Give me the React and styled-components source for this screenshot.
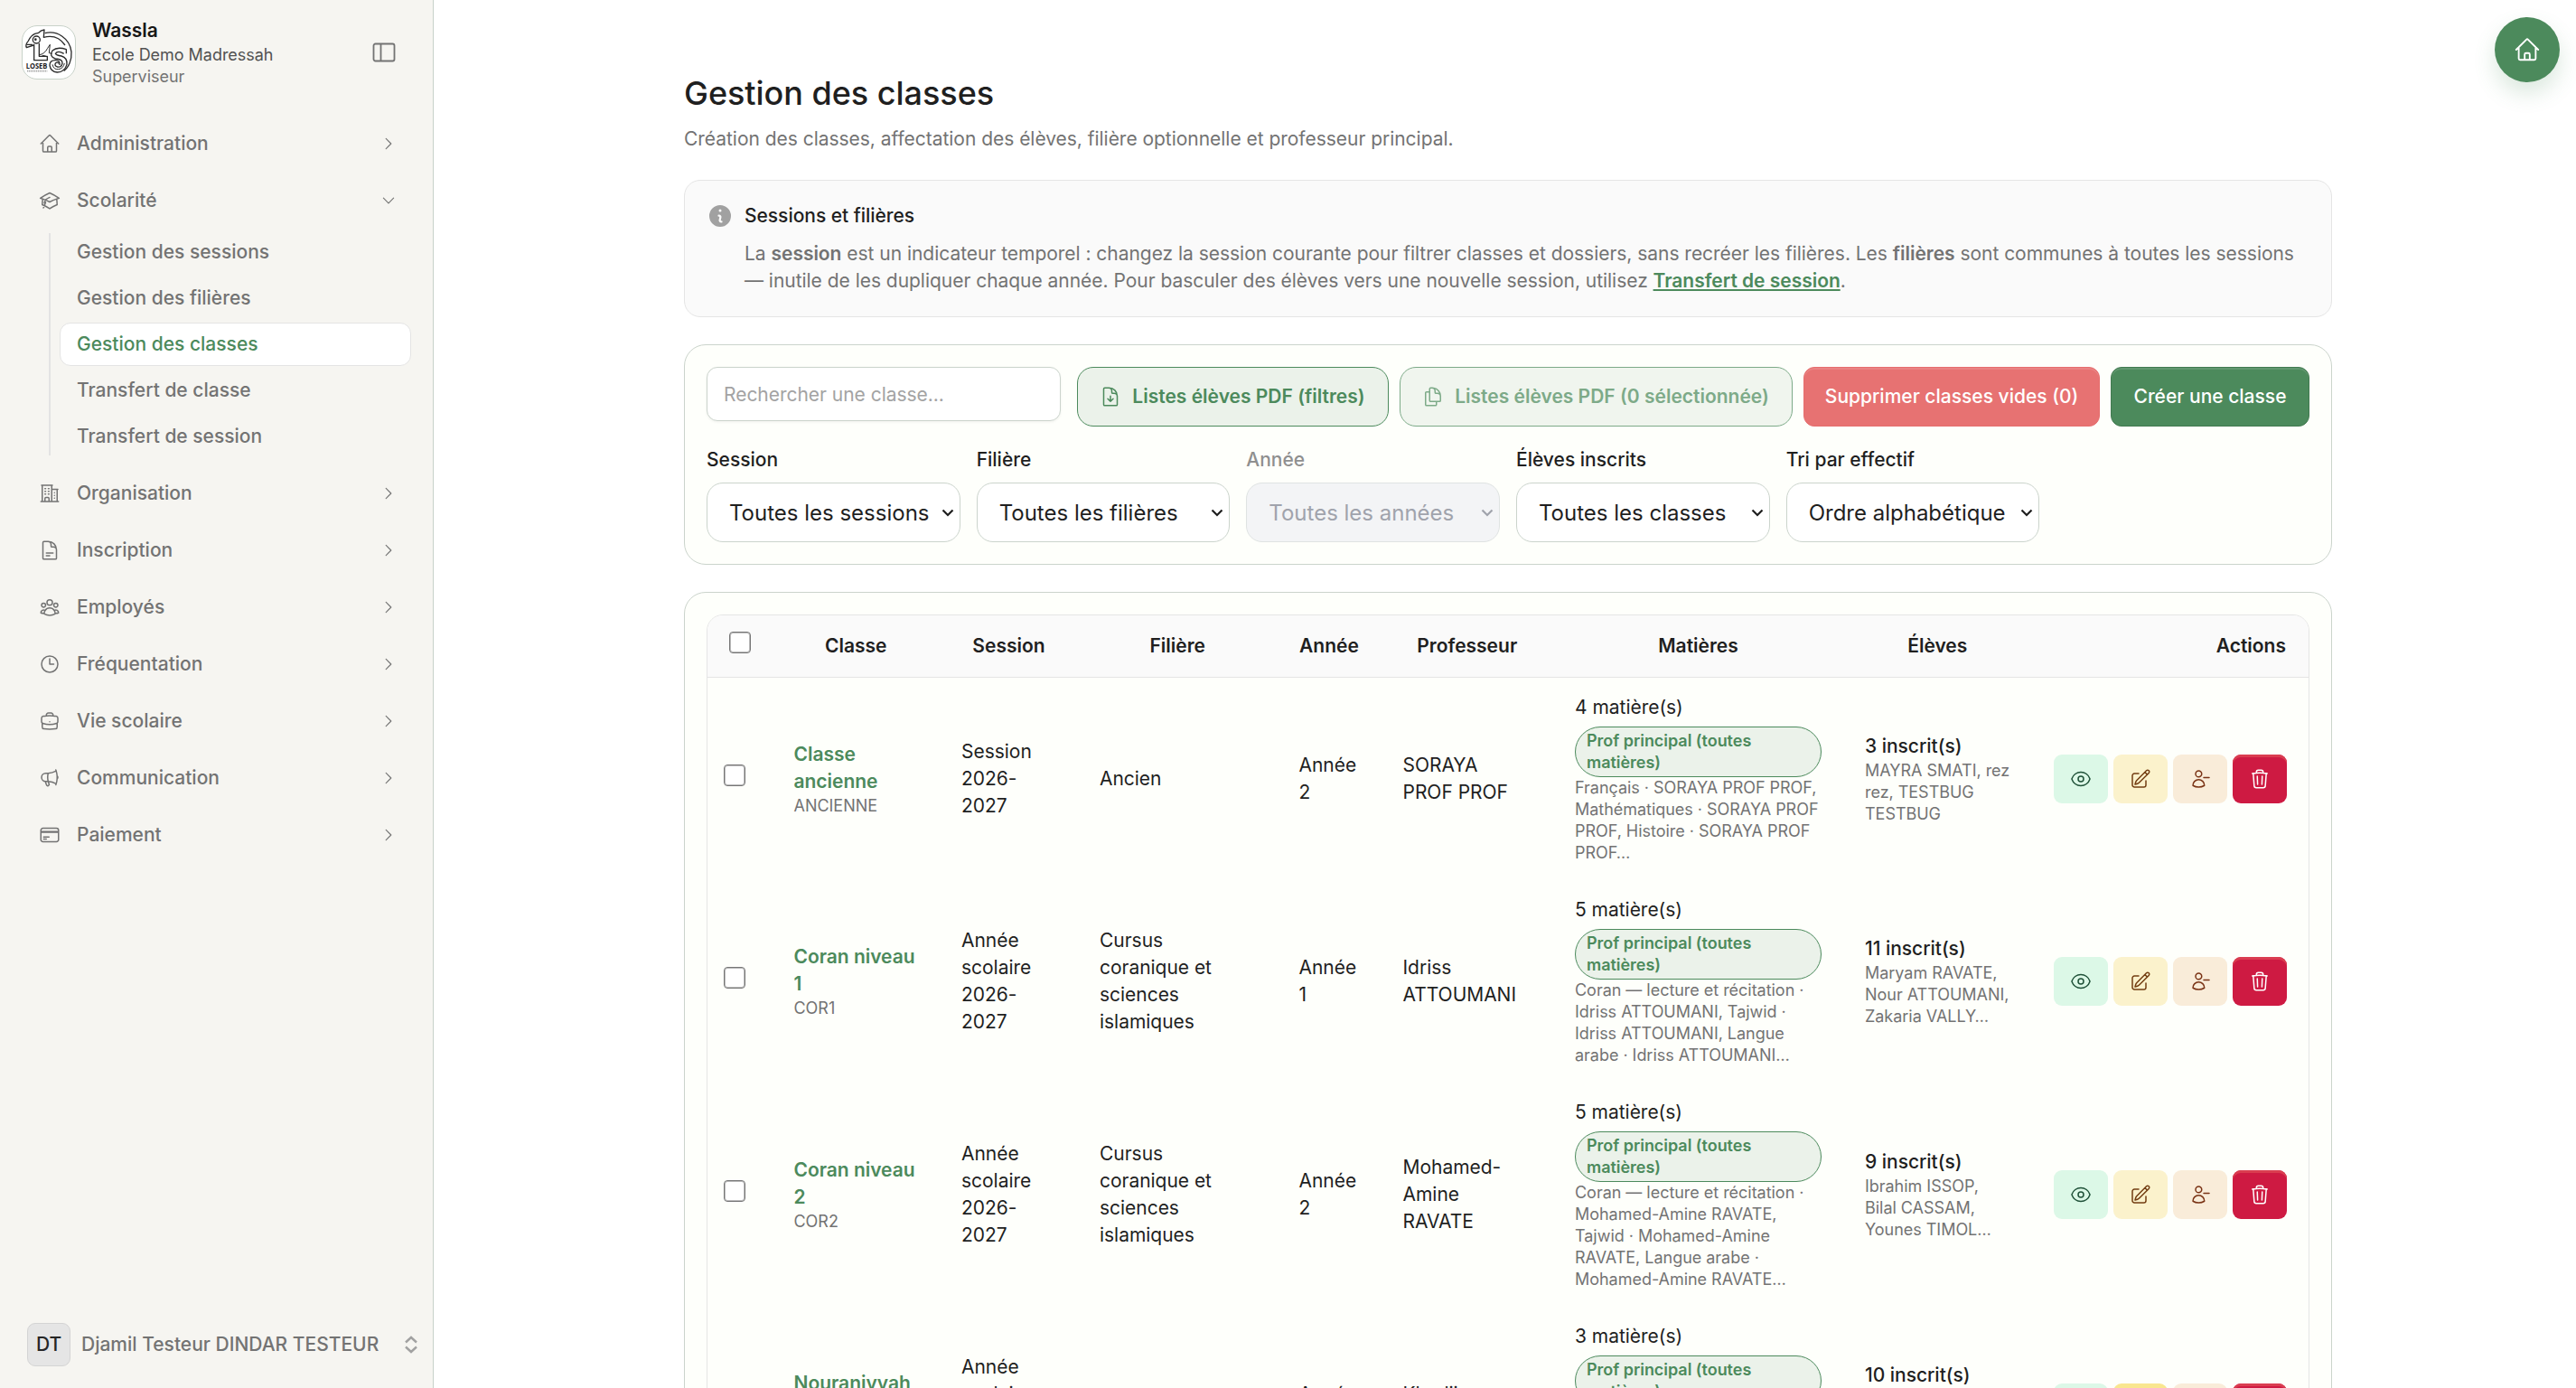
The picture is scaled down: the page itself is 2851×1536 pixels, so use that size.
import styled, { createGlobalStyle } from "styled-components";
import {
  HiOutlineHome,
  HiOutlineAcademicCap,
  HiOutlineBuildingOffice2,
  HiOutlineDocumentText,
  HiOutlineUserGroup,
  HiOutlineClock,
  HiOutlineBriefcase,
  HiOutlineMegaphone,
  HiOutlineCreditCard,
  HiOutlineChevronRight,
  HiOutlineChevronDown,
  HiOutlineDocumentArrowDown,
  HiOutlineDocumentDuplicate,
  HiOutlineEye,
  HiOutlinePencilSquare,
  HiOutlineUserMinus,
  HiOutlineTrash,
} from "react-icons/hi2";

const GlobalStyle = createGlobalStyle`
  * { box-sizing: border-box; }
  body {
    margin: 0;
    background: #fff;
    color: #1f1f1f;
    font-family: Inter, "Liberation Sans", sans-serif;
    font-size: 21px;
    line-height: 30px;
  }
  h1, h2, p { margin: 0; }
  button { font: inherit; cursor: pointer; }
  svg { display: block; flex-shrink: 0; }
`;

const Page = styled.div`
  display: flex;
  height: 1536px;
  overflow: hidden;
`;

const Sidebar = styled.aside`
  width: 480px;
  flex-shrink: 0;
  display: flex;
  flex-direction: column;
  background: #f6f5f1;
  border-right: 1px solid #c8d2c9;
  color: #737373;
`;

const Brand = styled.div`
  display: flex;
  align-items: center;
  height: 117px;
  padding: 0 41px 1px 24px;
`;

const LogoBox = styled.div`
  width: 60px;
  height: 60px;
  margin-right: 18px;
  border: 1px solid #c8d2c9;
  border-radius: 17px;
  background: #fff;
  overflow: hidden;
`;

const BrandText = styled.div`
  flex: 1;
  font-size: 18px;
  line-height: 24px;
  letter-spacing: -0.03px;
  strong {
    display: block;
    font-size: 21px;
    font-weight: 600;
    line-height: 30px;
    color: #171717;
  }
  span {
    display: block;
    color: #525252;
  }
  small {
    display: block;
    font-size: 18px;
  }
`;

const Nav = styled.nav`
  flex: 1;
  display: flex;
  flex-direction: column;
  gap: 3px;
  padding: 12px 24px 0;
`;

const NavItem = styled.a`
  display: flex;
  align-items: center;
  height: 60px;
  padding: 0 16px 0 19px;
  font-weight: 500;
  span {
    flex: 1;
    margin-left: 18px;
  }
`;

const SubNav = styled.div`
  display: flex;
  flex-direction: column;
  gap: 3px;
  margin: 0 0 6px 30px;
  padding-left: 12px;
  background: linear-gradient(#e3e3e3, #e3e3e3) 0 3px / 2px calc(100% - 6px) no-repeat;
`;

const SubItem = styled.a`
  height: 48px;
  width: 389px;
  padding: 8px 18px;
  border: 1px solid ${(p) => (p.$active ? "#e4e4e4" : "transparent")};
  border-radius: 12px;
  background: ${(p) => (p.$active ? "#fff" : "transparent")};
  color: ${(p) => (p.$active ? "#4c8a5c" : "inherit")};
  font-weight: 500;
`;

const Profile = styled.div`
  display: flex;
  align-items: center;
  height: 96px;
  padding: 0 16px 0 30px;
  font-weight: 500;
  span {
    flex: 1;
    margin-left: 12px;
    white-space: nowrap;
  }
`;

const Avatar = styled.div`
  width: 48px;
  height: 48px;
  display: flex;
  align-items: center;
  justify-content: center;
  border: 1px solid #d4d4d4;
  border-radius: 9px;
  background: #e5e5e5;
  color: #262626;
`;

const Main = styled.main`
  width: 2101px;
  padding: 80px 0 0 277px;
`;

const Title = styled.h1`
  font-size: 36px;
  font-weight: 500;
  line-height: 46px;
  letter-spacing: -0.03px;
`;

const Subtitle = styled.p`
  margin-top: 13px;
  color: #737373;
  letter-spacing: -0.03px;
`;

const Callout = styled.section`
  display: flex;
  gap: 12px;
  margin-top: 30px;
  padding: 24px;
  border: 1px solid #e5e5e5;
  border-radius: 18px;
  background: #fafafa;
  color: #737373;
  letter-spacing: -0.03px;
  > svg { color: #a1a1a1; }
  h2 {
    margin-bottom: 12px;
    font-size: 21px;
    font-weight: 500;
    line-height: 30px;
    color: #1f1f1f;
  }
  b { font-weight: 600; }
  a {
    color: #4c8a5c;
    font-weight: 600;
    text-decoration: underline;
  }
`;

const Card = styled.section`
  margin-top: 30px;
  padding: 24px;
  border: 1px solid #cbd4cc;
  border-radius: 24px;
  background: #fefffb;
`;

const Toolbar = styled.div`
  display: flex;
  align-items: flex-start;
  gap: 12px;
`;

const SearchInput = styled.input`
  width: 392px;
  height: 60px;
  margin-right: 6px;
  padding: 0 18px;
  border: 1px solid #cbd4cc;
  border-radius: 12px;
  background: #fff;
  box-shadow: 0 1px 3px rgba(0, 0, 0, 0.06);
  font: inherit;
  letter-spacing: -0.03px;
  &::placeholder {
    color: #a3a3a3;
    opacity: 1;
  }
`;

const OutlineButton = styled.button`
  display: flex;
  align-items: center;
  justify-content: center;
  gap: 12px;
  width: ${(p) => p.$width}px;
  height: 66px;
  padding: 0 1px 0 0;
  border: 1px solid #4c8a5c;
  border-radius: 18px;
  background: #ebf2ea;
  color: #4c8a5c;
  font-weight: 600;
  white-space: nowrap;
  opacity: ${(p) => (p.disabled ? 0.72 : 1)};
`;

const SolidButton = styled.button`
  width: ${(p) => p.$width}px;
  height: 66px;
  padding: 0;
  border: 1px solid ${(p) => (p.$danger ? "#e66e6e" : "#427a50")};
  border-radius: 12px;
  background: ${(p) => (p.$danger ? "#e77272" : "#4c8a5c")};
  box-shadow: inset 0 2px 0 rgba(255, 255, 255, 0.12);
  color: #fff;
  font-weight: 500;
  white-space: nowrap;
`;

const Filters = styled.div`
  display: grid;
  grid-template-columns: repeat(6, 1fr);
  gap: 18px;
  margin-top: 22px;
`;

const Field = styled.label`
  display: block;
  font-weight: 500;
  color: ${(p) => (p.$off ? "#8f8f8f" : "#1f1f1f")};
`;

const SelectBox = styled.div`
  display: flex;
  align-items: center;
  justify-content: space-between;
  height: 66px;
  margin-top: 10px;
  padding: 2px 6px 0 24px;
  border: 1px solid ${(p) => (p.$off ? "#dfe3e2" : "#cbd4cc")};
  border-radius: 18px;
  background: ${(p) => (p.$off ? "#f3f4f6" : "#fff")};
  color: ${(p) => (p.$off ? "#a0a3ac" : "#1f1f1f")};
  font-size: 24px;
  font-weight: 400;
  white-space: nowrap;
`;

const TableFrame = styled.div`
  border: 1px solid #e5e5e5;
  border-radius: 18px;
  overflow: hidden;
`;

const Table = styled.table`
  width: 100%;
  table-layout: fixed;
  border-collapse: separate;
  border-spacing: 0;
`;

const Th = styled.th`
  height: 69px;
  padding: 0 25px 0 24px;
  border-bottom: 1px solid #e5e5e5;
  background: #fafafa;
  font-weight: 600;
  text-align: ${(p) => p.$align || "center"};
`;

const Td = styled.td`
  padding: 18px 0 18px 23.5px;
  vertical-align: middle;
  white-space: pre-line;
  letter-spacing: -0.03px;
`;

const CheckCell = styled(Td)`
  padding: 0 0 8px 18px;
`;

const Checkbox = styled.input.attrs({ type: "checkbox" })`
  appearance: none;
  display: block;
  width: 24px;
  height: 24px;
  margin: 0;
  border: 1px solid #767676;
  border-radius: 4px;
  background: #fff;
  box-shadow: inset 0 0 0 1px rgba(118, 118, 118, 0.5);
`;

const HeadCheckbox = styled(Checkbox)`
  margin: 0 0 8px;
`;

const ClassName = styled.div`
  color: #4c8a5c;
  font-weight: 600;
`;

const Small = styled.div`
  color: #737373;
  font-size: 18px;
  line-height: 24px;
`;

const Badge = styled.div`
  width: 273px;
  margin-top: 6px;
  padding: 3px 12px;
  border: 1px solid #4c8a5c;
  border-radius: 28px;
  background: #ebf2ea;
  color: #4c8a5c;
  font-size: 18px;
  font-weight: 600;
  line-height: 24px;
`;

const Count = styled.div`
  font-weight: 500;
`;

const Actions = styled.div`
  display: flex;
  gap: 6px;
`;

const ActionButton = styled.button`
  width: 60px;
  height: 54px;
  display: flex;
  align-items: center;
  justify-content: center;
  padding: 0;
  border: 0;
  border-radius: 9px;
  background: ${(p) => p.$bg};
  color: ${(p) => p.$color};
  box-shadow: ${(p) => (p.$solid ? "inset 0 3px 0 #da3d50" : "none")};
`;

const HomeButton = styled.button`
  position: absolute;
  top: 19px;
  right: 18px;
  width: 72px;
  height: 72px;
  display: flex;
  align-items: center;
  justify-content: center;
  padding: 0;
  border: 0;
  border-radius: 50%;
  background: #4c8a5c;
  color: #fff;
  box-shadow: 0 12px 24px rgba(76, 138, 92, 0.2);
`;

const Logo = () => (
  <svg width="58" height="58" viewBox="75 87 174 174" fill="none" stroke="#2b2b2b" strokeWidth="4" strokeLinejoin="round">
    <path d="M112 150 L88 158 Q83 148 94 136 Q102 118 116 112 L128 109 Q134 101 147 99 L145 124 Q190 112 216 150" />
    <path d="M149 110 C190 100 232 128 237 172 C239 198 228 224 212 235" />
    <path d="M88 148 H108" />
    <circle cx="121" cy="132" r="12" />
    <circle cx="118" cy="131" r="2" fill="#2b2b2b" />
    <path d="M113 146 V200 H157 V187 H130 V144" />
    <path d="M130 182 Q148 180 158 160 L166 148 L163 176 L173 178 M140 184 L152 186" strokeWidth="3" />
    <path d="M220 178 V164 Q190 154 174 168 Q162 188 184 195 Q208 196 207 210 Q204 225 190 222 Q180 218 184 210 Q190 204 196 211" />
    <path d="M212 178 Q192 166 184 178 Q186 184 204 186 Q224 192 222 214 Q214 240 190 240 Q168 238 165 217 Q165 200 184 200 Q200 200 198 216" />
    <path d="M174 214 Q178 232 194 230 Q210 228 214 210" strokeWidth="3" />
    <text x="86" y="227" fill="#1c1c1c" stroke="none" fontFamily="Open Sans, sans-serif" fontSize="26" fontWeight="700" textLength="71" lengthAdjust="spacingAndGlyphs">LOSEB</text>
    <path d="M90 236 H157" strokeWidth="5" strokeDasharray="4 2" stroke="#a8a8a8" />
  </svg>
);

const PanelIcon = () => (
  <svg width="26" height="22" viewBox="0 0 26 22" fill="none" stroke="#737373" strokeWidth="1.8">
    <rect x="1.5" y="1.5" width="23" height="19" rx="2" />
    <path d="M9.5 1.5v19" />
  </svg>
);

const InfoIcon = () => (
  <svg width="30" height="30" viewBox="0 0 20 20" fill="currentColor">
    <path
      fillRule="evenodd"
      clipRule="evenodd"
      d="M18 10a8 8 0 1 1-16 0 8 8 0 0 1 16 0Zm-7-4a1 1 0 1 1-2 0 1 1 0 0 1 2 0ZM9 9a.75.75 0 0 0 0 1.5h.253a.25.25 0 0 1 .244.304l-.459 2.066A1.75 1.75 0 0 0 10.747 15H11a.75.75 0 0 0 0-1.5h-.253a.25.25 0 0 1-.244-.304l.459-2.066A1.75 1.75 0 0 0 9.253 9H9Z"
    />
  </svg>
);

const UpDownIcon = () => (
  <svg width="16" height="20" viewBox="0 0 16 20" fill="none" stroke="#a1a1a1" strokeWidth="2.4">
    <path d="M2 7.5 8 2l6 5.5M2 12.5 8 18l6-5.5" />
  </svg>
);

const SelectArrow = () => (
  <svg width="14" height="10" viewBox="0 0 14 10" fill="none" stroke="currentColor" strokeWidth="2.2">
    <path d="M1.5 1.5 7 7l5.5-5.5" />
  </svg>
);

const menuTop = [{ icon: HiOutlineHome, label: "Administration" }];

const menuBottom = [
  { icon: HiOutlineBuildingOffice2, label: "Organisation" },
  { icon: HiOutlineDocumentText, label: "Inscription" },
  { icon: HiOutlineUserGroup, label: "Employés" },
  { icon: HiOutlineClock, label: "Fréquentation" },
  { icon: HiOutlineBriefcase, label: "Vie scolaire" },
  { icon: HiOutlineMegaphone, label: "Communication" },
  { icon: HiOutlineCreditCard, label: "Paiement" },
];

const subMenu = [
  "Gestion des sessions",
  "Gestion des filières",
  "Gestion des classes",
  "Transfert de classe",
  "Transfert de session",
];

const filters = [
  { label: "Session", value: "Toutes les sessions" },
  { label: "Filière", value: "Toutes les filières" },
  { label: "Année", value: "Toutes les années", off: true },
  { label: "Élèves inscrits", value: "Toutes les classes" },
  { label: "Tri par effectif", value: "Ordre alphabétique" },
];

const columnWidths = [72, 185.5, 153, 220.5, 115, 190.5, 321, 208.5, 306];

const rows = [
  {
    name: "Classe\nancienne",
    code: "ANCIENNE",
    session: "Session\n2026-\n2027",
    track: "Ancien",
    year: "Année\n2",
    teacher: "SORAYA\nPROF PROF",
    subjects: "4 matière(s)",
    details: "Français · SORAYA PROF PROF,\nMathématiques · SORAYA PROF\nPROF, Histoire · SORAYA PROF\nPROF…",
    count: "3 inscrit(s)",
    students: "MAYRA SMATI, rez\nrez, TESTBUG\nTESTBUG",
  },
  {
    name: "Coran niveau\n1",
    code: "COR1",
    session: "Année\nscolaire\n2026-\n2027",
    track: "Cursus\ncoranique et\nsciences\nislamiques",
    year: "Année\n1",
    teacher: "Idriss\nATTOUMANI",
    subjects: "5 matière(s)",
    details: "Coran — lecture et récitation ·\nIdriss ATTOUMANI, Tajwid ·\nIdriss ATTOUMANI, Langue\narabe · Idriss ATTOUMANI…",
    count: "11 inscrit(s)",
    students: "Maryam RAVATE,\nNour ATTOUMANI,\nZakaria VALLY…",
  },
  {
    name: "Coran niveau\n2",
    code: "COR2",
    session: "Année\nscolaire\n2026-\n2027",
    track: "Cursus\ncoranique et\nsciences\nislamiques",
    year: "Année\n2",
    teacher: "Mohamed-\nAmine\nRAVATE",
    subjects: "5 matière(s)",
    details: "Coran — lecture et récitation ·\nMohamed-Amine RAVATE,\nTajwid · Mohamed-Amine\nRAVATE, Langue arabe ·\nMohamed-Amine RAVATE…",
    count: "9 inscrit(s)",
    students: "Ibrahim ISSOP,\nBilal CASSAM,\nYounes TIMOL…",
  },
  {
    name: "Nouraniyyah\n1",
    code: "NOUR1",
    session: "Année\nscolaire\n2026-\n2027",
    track: "Nouraniyyah",
    year: "Année\n1",
    teacher: "Khadija\nRAVATE",
    subjects: "3 matière(s)",
    details: "Nouraniyyah · Khadija\nRAVATE, Tajwid · Khadija\nRAVATE, Langue arabe ·\nKhadija RAVATE…",
    count: "10 inscrit(s)",
    students: "Amina ISSOP,\nSafiya CASSAM,\nYasmine VALLY…",
    highlight: true,
  },
];

const MenuEntry = ({ icon: Icon, label, open }) => (
  <NavItem>
    <Icon size={24} />
    <span>{label}</span>
    {open ? <HiOutlineChevronDown size={18} /> : <HiOutlineChevronRight size={18} />}
  </NavItem>
);

const ClassRow = ({ row }) => (
  <tr>
    <CheckCell><Checkbox /></CheckCell>
    <Td>
      <ClassName>{row.name}</ClassName>
      <Small>{row.code}</Small>
    </Td>
    <Td>{row.session}</Td>
    <Td>{row.track}</Td>
    <Td>{row.year}</Td>
    <Td>{row.teacher}</Td>
    <Td>
      <div>{row.subjects}</div>
      <Badge>{"Prof principal (toutes\nmatières)"}</Badge>
      <Small>{row.details}</Small>
    </Td>
    <Td>
      <Count>{row.count}</Count>
      <Small>{row.students}</Small>
    </Td>
    <Td>
      <Actions>
        <ActionButton $bg="#dcf8e7" $color="#1f5138"><HiOutlineEye size={24} /></ActionButton>
        <ActionButton $bg={row.highlight ? "#f9e68f" : "#fbf2cc"} $color="#733e12"><HiOutlinePencilSquare size={24} /></ActionButton>
        <ActionButton $bg="#f9ecd9" $color="#7a3315"><HiOutlineUserMinus size={24} /></ActionButton>
        <ActionButton $bg="#ce1a42" $color="#fff" $solid><HiOutlineTrash size={24} /></ActionButton>
      </Actions>
    </Td>
  </tr>
);

export default function App() {
  return (
    <Page>
      <GlobalStyle />
      <Sidebar>
        <Brand>
          <LogoBox><Logo /></LogoBox>
          <BrandText>
            <strong>Wassla</strong>
            <span>Ecole Demo Madressah</span>
            <small>Superviseur</small>
          </BrandText>
          <PanelIcon />
        </Brand>
        <Nav>
          {menuTop.map((m) => <MenuEntry key={m.label} {...m} />)}
          <MenuEntry icon={HiOutlineAcademicCap} label="Scolarité" open />
          <SubNav>
            {subMenu.map((s) => (
              <SubItem key={s} $active={s === "Gestion des classes"}>{s}</SubItem>
            ))}
          </SubNav>
          {menuBottom.map((m) => <MenuEntry key={m.label} {...m} />)}
        </Nav>
        <Profile>
          <Avatar>DT</Avatar>
          <span>Djamil Testeur DINDAR TESTEUR</span>
          <UpDownIcon />
        </Profile>
      </Sidebar>

      <Main>
        <Title>Gestion des classes</Title>
        <Subtitle>Création des classes, affectation des élèves, filière optionnelle et professeur principal.</Subtitle>

        <Callout>
          <InfoIcon />
          <div>
            <h2>Sessions et filières</h2>
            <p>
              La <b>session</b> est un indicateur temporel : changez la session courante pour filtrer classes et dossiers, sans recréer les filières. Les <b>filières</b> sont communes à toutes les sessions
              <br />
              — inutile de les dupliquer chaque année. Pour basculer des élèves vers une nouvelle session, utilisez <a>Transfert de session</a>.
            </p>
          </div>
        </Callout>

        <Card>
          <Toolbar>
            <SearchInput placeholder="Rechercher une classe..." />
            <OutlineButton $width={345}>
              <HiOutlineDocumentArrowDown size={24} />
              Listes élèves PDF (filtres)
            </OutlineButton>
            <OutlineButton $width={435} disabled>
              <HiOutlineDocumentDuplicate size={24} />
              Listes élèves PDF (0 sélectionnée)
            </OutlineButton>
            <SolidButton $width={328} $danger>Supprimer classes vides (0)</SolidButton>
            <SolidButton $width={220}>Créer une classe</SolidButton>
          </Toolbar>
          <Filters>
            {filters.map((f) => (
              <Field key={f.label} $off={f.off}>
                {f.label}
                <SelectBox $off={f.off}>
                  {f.value}
                  <SelectArrow />
                </SelectBox>
              </Field>
            ))}
          </Filters>
        </Card>

        <Card>
          <TableFrame>
            <Table>
              <colgroup>
                {columnWidths.map((w, i) => <col key={i} style={{ width: w }} />)}
              </colgroup>
              <thead>
                <tr>
                  <Th><HeadCheckbox /></Th>
                  <Th>Classe</Th>
                  <Th>Session</Th>
                  <Th>Filière</Th>
                  <Th>Année</Th>
                  <Th>Professeur</Th>
                  <Th>Matières</Th>
                  <Th>Élèves</Th>
                  <Th $align="right">Actions</Th>
                </tr>
              </thead>
              <tbody>
                {rows.map((r) => <ClassRow key={r.name} row={r} />)}
              </tbody>
            </Table>
          </TableFrame>
        </Card>
      </Main>

      <HomeButton><HiOutlineHome size={30} /></HomeButton>
    </Page>
  );
}
